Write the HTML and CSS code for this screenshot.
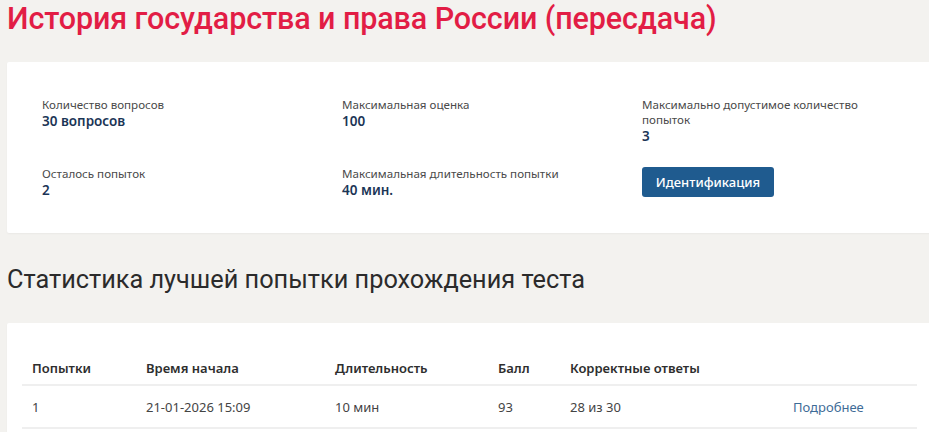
FILE: index.html
```html
<!DOCTYPE html>
<html lang="ru">
<head>
<meta charset="utf-8">
<title>История государства и права России (пересдача)</title>
<link rel="stylesheet" href="styles.css">
</head>
<body>
<div class="page">
  <h1 class="title">История государства и права России (пересдача)</h1>
  <section class="card info">
    <div class="info-grid">
      <div class="item">
        <div class="label">Количество вопросов</div>
        <div class="value">30 вопросов</div>
      </div>
      <div class="item">
        <div class="label">Максимальная оценка</div>
        <div class="value">100</div>
      </div>
      <div class="item">
        <div class="label narrow">Максимально допустимое количество попыток</div>
        <div class="value">3</div>
      </div>
      <div class="item">
        <div class="label">Осталось попыток</div>
        <div class="value">2</div>
      </div>
      <div class="item">
        <div class="label">Максимальная длительность попытки</div>
        <div class="value">40 мин.</div>
      </div>
      <div class="item">
        <button class="btn" type="button">Идентификация</button>
      </div>
    </div>
  </section>
  <h2 class="subtitle">Статистика лучшей попытки прохождения теста</h2>
  <section class="card stats">
    <table class="table">
      <thead>
        <tr>
          <th class="c1">Попытки</th>
          <th class="c2">Время начала</th>
          <th class="c3">Длительность</th>
          <th class="c4">Балл</th>
          <th class="c5">Корректные ответы</th>
          <th class="c6"></th>
        </tr>
      </thead>
      <tbody>
        <tr>
          <td>1</td>
          <td>21-01-2026 15:09</td>
          <td>10 мин</td>
          <td>93</td>
          <td>28 из 30</td>
          <td><a class="link" href="#">Подробнее</a></td>
        </tr>
      </tbody>
    </table>
  </section>
</div>
</body>
</html>
```

FILE: styles.css
```css
html, body {
  margin: 0;
  padding: 0;
  background: #f3f2ef;
  overflow: hidden;
}

body {
  font-family: "Segoe UI", "Noto Sans", "Open Sans", sans-serif;
  color: #333;
}

.page {
  padding-left: 7px;
  width: 925px;
}

.title {
  margin: 0;
  font-family: Roboto, "Noto Sans", sans-serif;
  font-weight: 500;
  font-size: 30.5px;
  line-height: 38px;
  color: #e21d45;
  letter-spacing: -0.1px;
}

.card {
  background: #fff;
  border-radius: 2px;
  box-shadow: 0 1px 2px rgba(0,0,0,0.04);
}

.info {
  margin-top: 24px;
  padding: 35px 35px 35px;
  height: 101px;
}

.info-grid {
  display: grid;
  grid-template-columns: 300px 300px 260px;
  row-gap: 21px;
}

.label {
  font-size: 11.6px;
  line-height: 15px;
  color: #4a4a4a;
}

.label.narrow {
  max-width: 220px;
}

.value {
  font-size: 13.5px;
  line-height: 18px;
  font-weight: 600;
  color: #1b3556;
}

.btn {
  font-family: inherit;
  background: #1f5b8f;
  color: #fff;
  border: 0;
  border-radius: 3px;
  font-size: 13px;
  font-weight: 500;
  width: 132px;
  height: 30px;
  padding: 0;
  margin-top: 1px;
  cursor: pointer;
}

.subtitle {
  margin: 0;
  padding-top: 32px;
  font-family: Roboto, "Noto Sans", sans-serif;
  font-weight: 400;
  font-size: 25.3px;
  line-height: 30px;
  color: #2b2b2b;
  height: 58px;
}

.stats {
  padding: 28px 15px 0;
  min-height: 90px;
}

.table {
  width: 100%;
  border-collapse: collapse;
  font-size: 13px;
}

.table th {
  text-align: left;
  font-weight: 600;
  color: #2e2e2e;
  padding: 8px 10px 7px;
  line-height: 18px;
  border-bottom: 2px solid #efefef;
}

.table td {
  text-align: left;
  color: #444;
  padding: 12px 10px 11px;
  line-height: 18px;
  border-bottom: 2px solid #efefef;
}

.c1 { width: 94px; }
.c2 { width: 169px; }
.c3 { width: 143px; }
.c4 { width: 52px; }
.c5 { width: 203px; }

.link {
  color: #3e6c97;
  text-decoration: none;
}
```
